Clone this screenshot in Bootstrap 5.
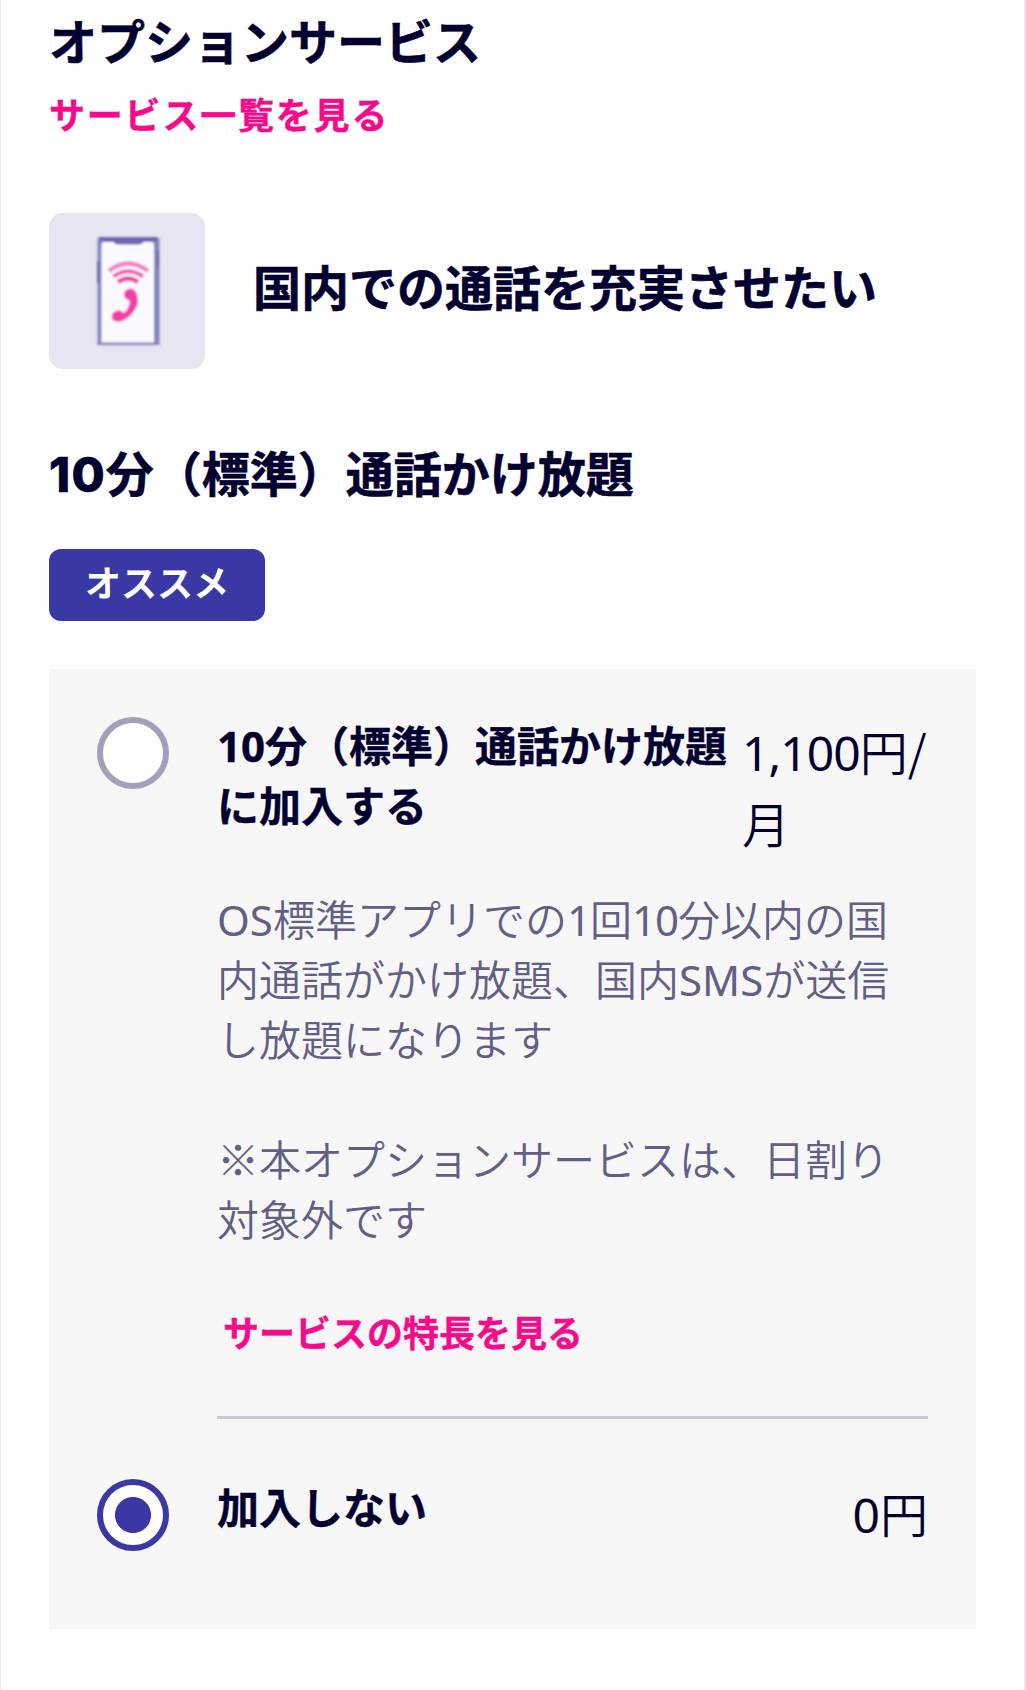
<!DOCTYPE html>
<html lang="ja">
<head>
<meta charset="utf-8">
<meta name="viewport" content="width=device-width, initial-scale=1">
<title>オプションサービス</title>
<link href="https://cdn.jsdelivr.net/npm/bootstrap@5.3.0/dist/css/bootstrap.min.css" rel="stylesheet">
<style>
body{background:#fff;color:#03002f;font-family:"Noto Sans","Noto Sans CJK JP",sans-serif}
.page{height:1690px;padding:6px 48px 0;border-left:1px solid #e8e8ed;border-right:2px solid #e6e5f0;overflow:hidden}
.head-xl{font-size:48px;line-height:72px;white-space:nowrap;-webkit-text-stroke:.6px currentColor}
.pink{color:#f50a8b;font-size:36px;line-height:54px;font-weight:700;text-decoration:none;white-space:nowrap;-webkit-text-stroke:.4px currentColor}
.pink-wide{letter-spacing:1.8px;margin-top:11px}
.category{gap:48px;margin-top:70px}
.category .head-xl{padding-bottom:6px}
.thumb{width:156px;height:156px;border-radius:14px;background:#e6e5f1}
.plan-head{margin-top:69px}
.num{font-family:Inter,sans-serif;font-weight:800;letter-spacing:1.2px}
.reco{background:#3a38a4;border-radius:12px;height:72px;padding:0 36px;font-size:36px;line-height:69px;margin-top:38px}
.panel{background:#f7f7f8;height:960px;margin-top:48px;padding:48px 48px 0}
.option{gap:48px}
.option .form-check-input{width:72px;height:72px;margin:0;border:6px solid #a2a0bb;background-color:#fff;box-shadow:none}
.option .form-check-input:checked{border-color:#3a38a4;background-image:radial-gradient(circle,#3a38a4 17.6px,transparent 18.4px)}
.label{font-size:42px;line-height:60px;font-weight:700;margin-top:-1px;-webkit-text-stroke:.4px currentColor}
.price{font-size:48px;line-height:72px;width:186px;margin-top:-3px;font-family:"Noto Sans CJK JP",sans-serif;font-weight:350}
.detail{font-size:42px;line-height:60px;color:#625f86;margin-top:30px;white-space:nowrap;font-family:"Noto Sans CJK JP",sans-serif;font-weight:350}
.latin{font-family:"Noto Sans",sans-serif;font-weight:400;line-height:1}
.digits{letter-spacing:-1px}
.more{margin:59px 0 0 6px}
.rule{height:3px;background:#cac9d8;margin-top:55px}
.second{margin-top:60px}
</style>
</head>
<body>
<main class="page">
  <h1 class="head-xl fw-bold mb-0">オプションサービス</h1>
  <a class="pink pink-wide d-block" href="#">サービス一覧を見る</a>

  <section class="category d-flex align-items-center">
    <div class="thumb flex-shrink-0">
      <svg width="156" height="156" viewBox="0 0 156 156" fill="none" aria-hidden="true">
        <defs><filter id="soft" x="-10%" y="-10%" width="120%" height="120%"><feGaussianBlur stdDeviation="1"/></filter></defs>
        <g filter="url(#soft)">
          <path d="M48.500 132V27q0-3 4-3h54q4 0 4 3v105z" fill="#8583bd"/>
          <path d="M52.500 129.500V32q0-3 3-3h46.500q3 0 3 3v97.500z" fill="#fbfaff"/>
          <path d="M51 24.500h57v3.500H51z" fill="#6664ad"/>
          <path d="M64 27h31q-1 4.500-5 4.500H69q-4 0-5-4.500z" fill="#6b69b2"/>
          <path d="M49 48v22M109 38v17" stroke="#6a68ac" stroke-width="2"/>
          <path d="M60 58Q79 43 99 58" stroke="#f67fc0" stroke-width="4.500"/>
          <path d="M64.500 63.500Q79 53 94 63.500" stroke="#f05cae" stroke-width="4"/>
          <path d="M69 69Q79 62 89 69" stroke="#ea45a0" stroke-width="4.500"/>
          <path d="M76 78Q81 73 86.500 78Q91 87 87 95Q82 104 73 108Q66 110 63 106Q62 101 65 99L70 97L75 100Q80 96 81 88L76 85Q74 82 76 78Z" fill="#f23da3"/>
        </g>
      </svg>
    </div>
    <h2 class="head-xl fw-bold mb-0">国内での通話を充実させたい</h2>
  </section>

  <h3 class="plan-head head-xl fw-bold mb-0"><span class="num">10</span>分（標準）通話かけ放題</h3>
  <span class="reco badge d-inline-block fw-bold">オススメ</span>

  <section class="panel">
    <div class="option d-flex align-items-start">
      <input class="form-check-input flex-shrink-0" type="radio" name="plan" id="join" aria-label="加入する">
      <div class="flex-grow-1">
        <div class="d-flex justify-content-between">
          <label class="label text-nowrap" for="join">10分（標準）通話かけ放題<br>に加入する</label>
          <div class="price flex-shrink-0 text-nowrap"><span class="latin digits">1,100</span>円/<br>月</div>
        </div>
        <p class="detail mb-0"><span class="latin">OS</span>標準アプリでの<span class="latin digits">1</span>回<span class="latin digits">10</span>分以内の国<br>内通話がかけ放題、国内<span class="latin">SMS</span>が送信<br>し放題になります<br><br>※本オプションサービスは、日割り<br>対象外です</p>
        <a class="pink more d-block" href="#">サービスの特長を見る</a>
        <div class="rule"></div>
      </div>
    </div>
    <div class="option second d-flex align-items-start">
      <input class="form-check-input flex-shrink-0" type="radio" name="plan" id="skip" checked>
      <div class="flex-grow-1 d-flex justify-content-between">
        <label class="label" for="skip">加入しない</label>
        <div class="price text-end"><span class="latin">0</span>円</div>
      </div>
    </div>
  </section>
</main>
<script src="https://cdn.jsdelivr.net/npm/bootstrap@5.3.0/dist/js/bootstrap.bundle.min.js"></script>
</body>
</html>
